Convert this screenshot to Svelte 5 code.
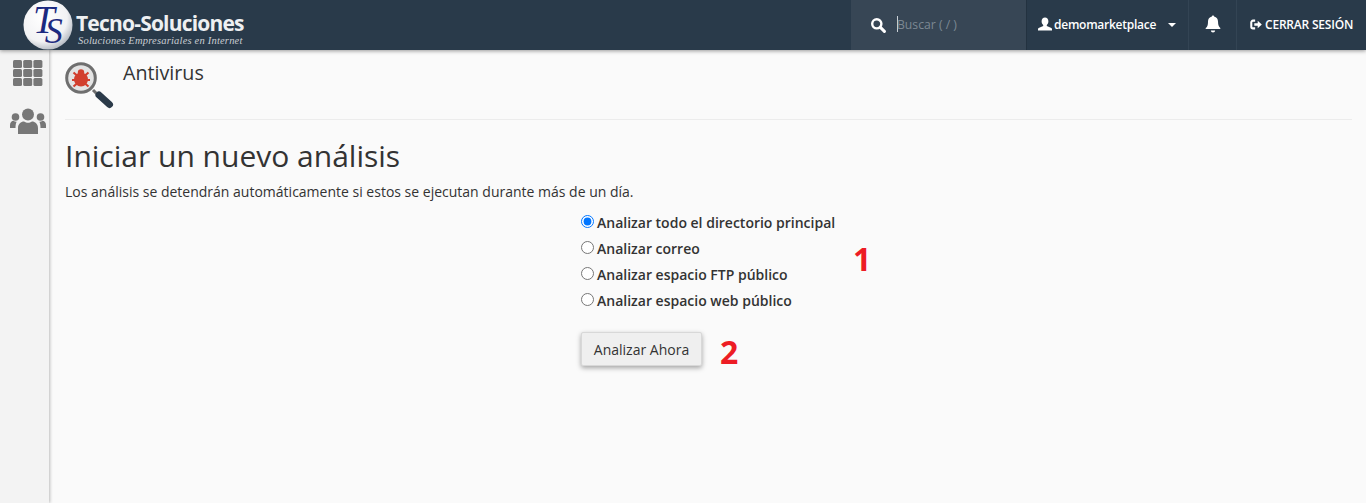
<script>
  const options = [
    'Analizar todo el directorio principal',
    'Analizar correo',
    'Analizar espacio FTP público',
    'Analizar espacio web público'
  ];
</script>

<div class="page">
  <header class="top">
    <div class="brand">
      <svg class="ts" viewBox="0 0 50 50" width="50" height="50">
        <defs>
          <radialGradient id="ball" cx="0.4" cy="0.35" r="0.7">
            <stop offset="0" stop-color="#ffffff" />
            <stop offset="0.7" stop-color="#f2f2f4" />
            <stop offset="1" stop-color="#aeb4bd" />
          </radialGradient>
        </defs>
        <circle cx="25" cy="25" r="24.5" fill="url(#ball)" />
        <text class="mono" x="10" y="33"><tspan class="t1">T</tspan><tspan class="t2" dx="-10" dy="10">S</tspan></text>
      </svg>
      <div class="words">
        <div class="name">Tecno-Soluciones</div>
        <div class="tag">Soluciones Empresariales en Internet</div>
      </div>
    </div>
    <div class="right">
      <div class="search">
        <svg viewBox="0 0 16 16" width="16" height="16"><circle cx="6.8" cy="6.8" r="4.6" fill="none" stroke="#fff" stroke-width="2.4"/><path d="M10.4 10.4 14.4 14.4" stroke="#fff" stroke-width="3" stroke-linecap="round"/></svg>
        <div class="field"><span class="caret"></span>Buscar ( / )</div>
      </div>
      <div class="user">
        <svg viewBox="0 0 14 14" width="14" height="14"><path d="M7 0.5c2 0 3.4 1.6 3.4 3.8 0 1.6-.7 3-1.600 3.700v1.100l4 1.600c.7.3 1.200.8 1.200 1.600v1.200H0v-1.200c0-.8.5-1.300 1.200-1.600l4-1.600V8C4.300 7.300 3.600 5.900 3.600 4.300 3.600 2.100 5 .5 7 .5z" fill="#fff"/></svg>
        <span>demomarketplace</span>
        <i class="tri"></i>
      </div>
      <div class="bell">
        <svg viewBox="0 0 16 18" width="16" height="18"><path d="M8 0.500c.7 0 1.100.5 1.100 1.100 2.500.5 3.900 2.500 3.900 5 0 3.800 1 5.200 2.300 6.500v1H.7v-1C2 12.300 3 10.900 3 6.600c0-2.500 1.400-4.500 3.900-5C6.900 1 7.300.5 8 .5z" fill="#fff"/><path d="M5.900 15.500h4.200c0 1.100-.9 2-2.100 2s-2.100-.9-2.100-2z" fill="#fff"/></svg>
      </div>
      <div class="logout">
        <svg viewBox="0 0 14 12" width="12" height="11"><path d="M6 1.500H3.500a2 2 0 0 0-2 2v5a2 2 0 0 0 2 2H6" fill="none" stroke="#fff" stroke-width="2.400"/><path d="M5 4.500h4V1.500L13.800 6 9 10.500v-3H5z" fill="#fff"/></svg>
        <span>CERRAR SESIÓN</span>
      </div>
    </div>
  </header>

  <div class="body">
    <aside class="side">
      <svg class="grid" viewBox="0 0 30 26" width="30" height="26">
        {#each [0, 1, 2] as r}
          {#each [0, 1, 2] as c}
            <rect x={c * 10.2} y={r * 9} width="9" height="8" rx="1.500" fill="#777" />
          {/each}
        {/each}
      </svg>
      <svg class="people" viewBox="0 0 36 26" width="36" height="26">
        <g fill="#777">
          <circle cx="18" cy="6.500" r="6" />
          <circle cx="5.500" cy="9" r="3.800" />
          <circle cx="30.500" cy="9" r="3.800" />
          <path d="M8 26v-6c0-4 3-6.500 6-6.500 1.500 1 2.500 1.300 4 1.300s2.500-.3 4-1.300c3 0 6 2.500 6 6.500v6z" />
          <path d="M0 20v-3c0-2.500 1.700-4.200 3.500-4.200 1 .7 2 1 3.200.9C5.900 15 5.500 17 5.500 20z" />
          <path d="M36 20v-3c0-2.500-1.700-4.200-3.500-4.200-1 .7-2 1-3.200.9.800 1.300 1.200 3.300 1.200 6.300z" />
        </g>
      </svg>
    </aside>

    <main class="main">
      <div class="head">
        <svg class="scope" viewBox="0 0 50 50" width="50" height="50">
          <path d="M28 30 34 36" stroke="#6f6f6f" stroke-width="3" />
          <path d="M34 35 44.500 44.500" stroke="#2b3a49" stroke-width="7" stroke-linecap="round" />
          <circle cx="16" cy="18" r="14.300" fill="#e4e4e4" stroke="#6f6f6f" stroke-width="3" />
          <g fill="#d23f2e" stroke="#d23f2e">
            <ellipse cx="16" cy="19.500" rx="7" ry="7" stroke="none" />
            <circle cx="16" cy="12.500" r="3.200" stroke="none" />
            <path d="M8.500 12.500 12 15.500M23.500 12.500 20 15.500M7 20H12M25 20H20M8.500 26.500 12 23.500M23.500 26.500 20 23.500" stroke-width="2.200" fill="none" />
          </g>
        </svg>
        <h1>Antivirus</h1>
      </div>
      <div class="rule"></div>
      <h2>Iniciar un nuevo análisis</h2>
      <p>Los análisis se detendrán automáticamente si estos se ejecutan durante más de un día.</p>
      <div class="form">
        <div class="opts">
          {#each options as o, i}
            <label class="opt"><input type="radio" name="scan" checked={i === 0} /><span>{o}</span></label>
          {/each}
          <span class="num one">1</span>
        </div>
        <div class="act">
          <button type="button">Analizar Ahora</button>
          <span class="num two">2</span>
        </div>
      </div>
    </main>
  </div>
</div>

<style>
  :global(body) {
    margin: 0;
    background: #fafafa;
  }
  .page {
    height: 503px;
    display: flex;
    flex-direction: column;
    font-family: "Open Sans", sans-serif;
    color: #333;
    overflow: hidden;
  }
  .top {
    height: 50px;
    flex: none;
    background: #293a4a;
    display: flex;
    justify-content: space-between;
    box-shadow: 0 1px 4px rgba(0, 0, 0, 0.4);
    position: relative;
    z-index: 2;
  }
  .brand {
    display: flex;
    padding-left: 23px;
  }
  .ts {
    flex: none;
    overflow: visible;
  }
  .mono {
    font-family: "Liberation Serif", serif;
    font-style: italic;
    fill: #1c2a80;
  }
  .t1 { font-size: 39px; }
  .t2 { font-size: 36px; }
  .words {
    margin-left: 3px;
    color: #fff;
  }
  .name {
    font-size: 21px;
    font-weight: 700;
    line-height: 26px;
    margin-top: 10px;
    letter-spacing: -0.8px;
    color: #eef0f2;
    white-space: nowrap;
  }
  .tag {
    font-family: "Liberation Serif", serif;
    font-style: italic;
    font-size: 10.500px;
    line-height: 12px;
    color: #c9ced3;
    letter-spacing: 0.2px;
    white-space: nowrap;
    margin: -1px 0 0 2px;
  }
  .right {
    display: flex;
    align-items: stretch;
    color: #fff;
  }
  .search {
    width: 175px;
    background: #374655;
    border-right: 1px solid #233240;
    display: flex;
    align-items: center;
    padding-bottom: 1px;
    box-sizing: content-box;
    height: 49px;
  }
  .search svg {
    margin-left: 19px;
  }
  .field {
    margin-left: 11px;
    font-size: 12.200px;
    color: #7c8893;
    line-height: 18px;
  }
  .caret {
    display: inline-block;
    width: 1px;
    height: 16px;
    background: #c9d0d6;
    vertical-align: -3px;
    margin-right: -1px;
  }
  .user {
    width: 162px;
    border-right: 1px solid #334454;
    display: flex;
    align-items: center;
    font-size: 12px;
    font-weight: 600;
    letter-spacing: -0.25px;
    box-sizing: border-box;
    padding: 0 0 2px 11px;
  }
  .user span {
    margin-left: 2px;
  }
  .tri {
    width: 0;
    height: 0;
    border-left: 4px solid transparent;
    border-right: 4px solid transparent;
    border-top: 4px solid #fff;
    margin: 2px 0 0 12px;
  }
  .bell {
    width: 48px;
    border-right: 1px solid #334454;
    display: flex;
    align-items: center;
    justify-content: center;
    box-sizing: border-box;
    padding-bottom: 3px;
  }
  .logout {
    width: 129px;
    display: flex;
    align-items: center;
    font-size: 12px;
    font-weight: 600;
    box-sizing: border-box;
    padding: 0 0 2px 13px;
    letter-spacing: -0.2px;
  }
  .logout span {
    margin-left: 3px;
  }
  .body {
    flex: 1;
    display: flex;
    min-height: 0;
  }
  .side {
    width: 49px;
    flex: none;
    background: #f3f3f3;
    box-shadow: 1px 0 3px rgba(0, 0, 0, 0.25);
    display: flex;
    flex-direction: column;
    align-items: center;
    box-sizing: border-box;
    padding: 10px 0 0 6px;
  }
  .people {
    margin-top: 22px;
  }
  .main {
    flex: 1;
    padding: 0 14px 0 16px;
    min-width: 0;
  }
  .head {
    display: flex;
    height: 69px;
    padding-top: 10px;
    box-sizing: border-box;
  }
  h1 {
    font-size: 19.700px;
    font-weight: 400;
    margin: 1px 0 0 8px;
    line-height: 24px;
  }
  .rule {
    height: 1px;
    background: #ececec;
  }
  h2 {
    font-size: 30px;
    font-weight: 400;
    line-height: 38px;
    margin: 17px 0 0;
  }
  p {
    font-size: 14px;
    line-height: 20px;
    margin: 7px 0 0;
  }
  .form {
    margin: 7px 0 0 516px;
  }
  .opts {
    position: relative;
  }
  .opt {
    display: flex;
    align-items: center;
    height: 26px;
    font-size: 14px;
    font-weight: 600;
  }
  .opt input {
    margin: 0 3px 0 0;
    width: 13px;
    height: 13px;
    position: relative;
    top: -1px;
  }
  .act {
    display: flex;
    align-items: center;
    margin-top: 19px;
  }
  button {
    width: 121px;
    height: 34px;
    font: 400 14px "Open Sans", sans-serif;
    color: #333;
    background: #efefef;
    border: 1px solid #d8d8d8;
    border-radius: 2px;
    box-shadow: 0 2px 5px rgba(0, 0, 0, 0.35);
    padding: 0;
  }
  .num {
    color: #ed1c24;
    font-size: 32px;
    font-weight: 700;
    line-height: 34px;
    margin-left: 18px;
  }
  .two {
    position: relative;
    top: 3px;
  }
  .one {
    position: absolute;
    left: 272px;
    top: 33px;
    margin: 0;
  }
</style>
